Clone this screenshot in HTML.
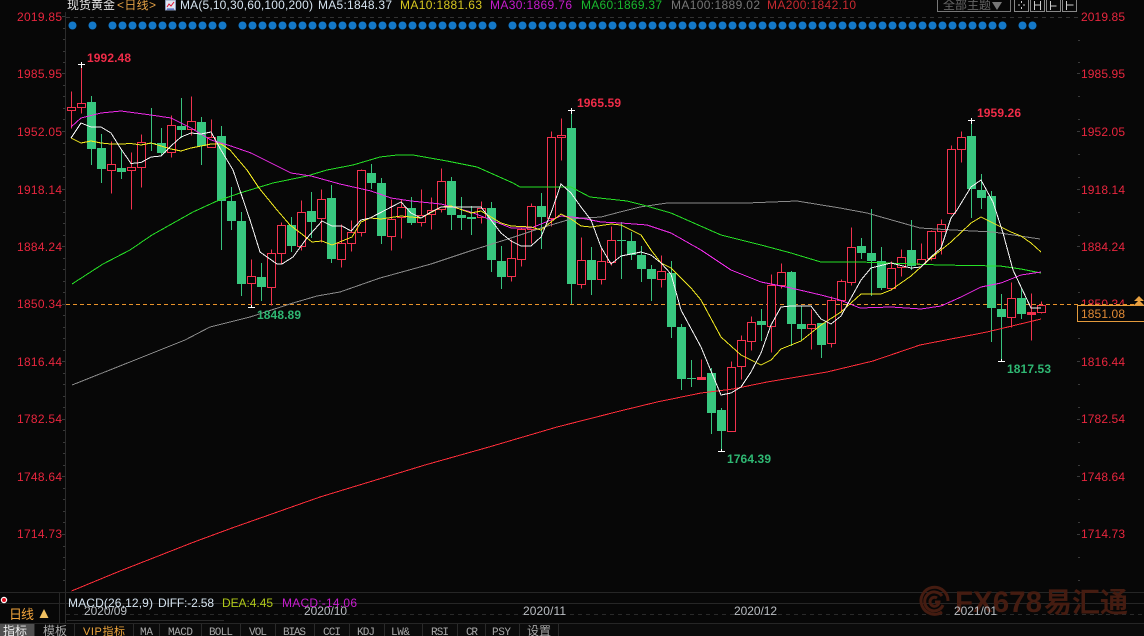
<!DOCTYPE html>
<html lang="zh"><head><meta charset="utf-8"><title>现货黄金 日线</title>
<style>
html,body{margin:0;padding:0;background:#070707;width:1144px;height:636px;overflow:hidden}
svg{display:block}
text{font-family:"Liberation Sans","Noto Sans CJK SC",sans-serif;font-size:12px}
.ax{fill:#e8263e}
.hi{fill:#f02c48;font-weight:bold}
.lo{fill:#2fb873;font-weight:bold}
.dt{fill:#b9bdc2}
.tb{fill:#a8a8a8;font-family:"Liberation Mono","Noto Sans CJK SC",monospace;font-size:11px}
.tc{fill:#a8a8a8;font-family:"Liberation Sans","Noto Sans CJK SC",sans-serif;font-size:12px}
.ma{fill:none;stroke-width:1;shape-rendering:crispEdges}
</style></head><body>
<svg xmlns="http://www.w3.org/2000/svg" width="1144" height="636" viewBox="0 0 1144 636">
<rect width="1144" height="636" fill="#070707"/>

<!-- frame lines -->
<path d="M65.5 12V623" stroke="#2b2b2b" fill="none"/>
<path d="M66 17.5H1078" stroke="#333" stroke-dasharray="4 4" fill="none"/>
<path d="M0 592.5H1144M0 603.5H1144M0 623.5H1144" stroke="#262626" fill="none"/>
<path d="M66 614.5H1144" stroke="#2a2a2a" stroke-dasharray="4 4" fill="none"/>
<path d="M67 620.5H224" stroke="#2a2a2a" fill="none"/>
<path d="M59.5 592V623" stroke="#262626" fill="none"/>

<!-- axis ticks -->
<path d="M62 16.5h3M63 28.5h2M63 39.5h2M63 51.5h2M63 62.5h2M62 73.5h3M63 85.5h2M63 96.5h2M63 108.5h2M63 119.5h2M62 131.5h3M63 143.5h2M63 154.5h2M63 166.5h2M63 177.5h2M62 189.5h3M63 200.5h2M63 212.5h2M63 223.5h2M63 235.5h2M62 246.5h3M63 258.5h2M63 269.5h2M63 281.5h2M63 292.5h2M62 304.5h3M63 315.5h2M63 327.5h2M63 338.5h2M63 350.5h2M62 361.5h3M63 373.5h2M63 384.5h2M63 396.5h2M63 407.5h2M62 419.5h3M63 430.5h2M63 442.5h2M63 453.5h2M63 465.5h2M62 476.5h3M63 488.5h2M63 499.5h2M63 511.5h2M63 522.5h2M62 534.5h3M63 546.5h2M63 557.5h2M63 569.5h2M63 580.5h2" stroke="#3a3a3a" fill="none"/>
<path d="M1078 40.5h2M1078 62.5h2M1077 73.5h3M1078 96.5h2M1078 119.5h2M1077 131.5h3M1078 154.5h2M1078 177.5h2M1077 189.5h3M1078 212.5h2M1078 235.5h2M1077 246.5h3M1078 269.5h2M1078 292.5h2M1077 361.5h3M1078 338.5h2M1078 384.5h2M1078 407.5h2M1077 419.5h3M1078 442.5h2M1078 465.5h2M1077 476.5h3M1078 499.5h2M1078 522.5h2M1077 534.5h3M1078 557.5h2M1078 580.5h2" stroke="#3a3a3a" fill="none"/>

<!-- y labels left -->
<g>
<text x="17" y="21" textLength="45" class="ax">2019.85</text>
<text x="17" y="78" textLength="45" class="ax">1985.95</text>
<text x="17" y="136" textLength="45" class="ax">1952.05</text>
<text x="17" y="194" textLength="45" class="ax">1918.14</text>
<text x="17" y="251" textLength="45" class="ax">1884.24</text>
<text x="17" y="308" textLength="45" class="ax">1850.34</text>
<text x="17" y="366" textLength="45" class="ax">1816.44</text>
<text x="17" y="423" textLength="45" class="ax">1782.54</text>
<text x="17" y="481" textLength="45" class="ax">1748.64</text>
<text x="17" y="538" textLength="45" class="ax">1714.73</text>
</g>
<!-- y labels right -->
<g>
<text x="1081" y="21" textLength="44" class="ax">2019.85</text>
<text x="1081" y="78" textLength="44" class="ax">1985.95</text>
<text x="1081" y="136" textLength="44" class="ax">1952.05</text>
<text x="1081" y="194" textLength="44" class="ax">1918.14</text>
<text x="1081" y="251" textLength="44" class="ax">1884.24</text>
<text x="1081" y="308" textLength="44" class="ax">1850.34</text>
<text x="1081" y="366" textLength="44" class="ax">1816.44</text>
<text x="1081" y="423" textLength="44" class="ax">1782.54</text>
<text x="1081" y="481" textLength="44" class="ax">1748.64</text>
<text x="1081" y="538" textLength="44" class="ax">1714.73</text>
</g>

<!-- title bar -->
<text x="67" y="9" fill="#e4e4e4" textLength="48">现货黄金</text>
<text x="117" y="9" fill="#e2a045" textLength="39">&lt;日线&gt;</text>
<rect x="165.5" y="0" width="10" height="10" fill="#dfe6f2" stroke="#8899bb"/>
<path d="M167 7l2-3 2 2 3-4" stroke="#e01030" fill="none"/>
<path d="M167 9h7" stroke="#3050c0" fill="none"/>
<text x="180" y="9" fill="#d6e4f0" textLength="133">MA(5,10,30,60,100,200)</text>
<text x="318" y="9" fill="#d6e4f0" textLength="74">MA5:1848.37</text>
<text x="400" y="9" fill="#d8c820" textLength="82">MA10:1881.63</text>
<text x="490" y="9" fill="#c81ccf" textLength="82">MA30:1869.76</text>
<text x="581" y="9" fill="#19b82e" textLength="81">MA60:1869.37</text>
<text x="671" y="9" fill="#777" textLength="89">MA100:1889.02</text>
<text x="767" y="9" fill="#c82a30" textLength="89">MA200:1842.10</text>

<!-- top right controls -->
<path d="M937.5 0V11.5H1010.5V0" fill="none" stroke="#777"/>
<text x="943" y="9" fill="#666" textLength="48">全部主题</text>
<path d="M992 2h10l-5 8z" fill="#777"/>
<g fill="none" stroke="#888">
<path d="M1014.5 0V11.5H1028.5V0M1030.5 0V11.5H1044.5V0M1046.5 0V11.5H1060.5V0M1062.5 0V11.5H1076.5V0"/>
<path d="M1021.5 1v2M1021.5 7v2M1018 5h2M1023 5h2" stroke="#ccc"/>
<path d="M1034.5 1v9M1040.500 1v9M1034.5 5h6" stroke="#ccc"/>
<path d="M1050.5 1v9M1050.5 6h6" stroke="#ccc"/>
<path d="M1066.5 1v9M1066.5 5h7" stroke="#ccc"/>
</g>

<!-- event dots -->
<g fill="#1478c8">
<circle cx="72.500" cy="25.5" r="4"/><circle cx="92.5" cy="25.5" r="4"/>
<circle cx="112.5" cy="25.5" r="4"/><circle cx="122.5" cy="25.5" r="4"/><circle cx="132.5" cy="25.5" r="4"/><circle cx="142.5" cy="25.5" r="4"/><circle cx="152.5" cy="25.5" r="4"/><circle cx="162.5" cy="25.5" r="4"/><circle cx="172.5" cy="25.5" r="4"/><circle cx="182.5" cy="25.5" r="4"/><circle cx="192.5" cy="25.5" r="4"/><circle cx="202.5" cy="25.5" r="4"/><circle cx="212.5" cy="25.5" r="4"/><circle cx="222.5" cy="25.5" r="4"/>
<circle cx="242.5" cy="25.5" r="4"/><circle cx="252.5" cy="25.5" r="4"/><circle cx="262.5" cy="25.5" r="4"/><circle cx="272.5" cy="25.5" r="4"/><circle cx="282.5" cy="25.5" r="4"/><circle cx="292.5" cy="25.5" r="4"/><circle cx="302.5" cy="25.5" r="4"/><circle cx="312.5" cy="25.5" r="4"/><circle cx="322.5" cy="25.5" r="4"/><circle cx="332.5" cy="25.5" r="4"/><circle cx="342.5" cy="25.5" r="4"/><circle cx="352.5" cy="25.5" r="4"/><circle cx="362.5" cy="25.5" r="4"/><circle cx="372.5" cy="25.5" r="4"/><circle cx="382.5" cy="25.5" r="4"/><circle cx="392.5" cy="25.5" r="4"/><circle cx="402.5" cy="25.5" r="4"/><circle cx="412.5" cy="25.5" r="4"/><circle cx="422.5" cy="25.5" r="4"/><circle cx="432.5" cy="25.5" r="4"/><circle cx="442.5" cy="25.5" r="4"/><circle cx="452.5" cy="25.5" r="4"/><circle cx="462.5" cy="25.5" r="4"/><circle cx="472.5" cy="25.5" r="4"/><circle cx="482.5" cy="25.5" r="4"/><circle cx="492.5" cy="25.5" r="4"/>
<circle cx="512.5" cy="25.5" r="4"/><circle cx="522.5" cy="25.5" r="4"/><circle cx="532.5" cy="25.5" r="4"/><circle cx="542.5" cy="25.5" r="4"/><circle cx="552.5" cy="25.5" r="4"/><circle cx="562.5" cy="25.5" r="4"/><circle cx="572.5" cy="25.5" r="4"/><circle cx="582.5" cy="25.5" r="4"/><circle cx="592.5" cy="25.5" r="4"/><circle cx="602.5" cy="25.5" r="4"/><circle cx="612.5" cy="25.5" r="4"/><circle cx="622.5" cy="25.5" r="4"/><circle cx="632.5" cy="25.5" r="4"/><circle cx="642.5" cy="25.5" r="4"/><circle cx="652.5" cy="25.5" r="4"/><circle cx="662.5" cy="25.5" r="4"/><circle cx="672.5" cy="25.5" r="4"/><circle cx="682.5" cy="25.5" r="4"/><circle cx="692.5" cy="25.5" r="4"/><circle cx="702.5" cy="25.5" r="4"/><circle cx="712.5" cy="25.5" r="4"/><circle cx="722.5" cy="25.5" r="4"/><circle cx="732.5" cy="25.5" r="4"/><circle cx="742.5" cy="25.5" r="4"/><circle cx="752.5" cy="25.5" r="4"/><circle cx="762.5" cy="25.5" r="4"/><circle cx="772.5" cy="25.5" r="4"/><circle cx="782.5" cy="25.5" r="4"/><circle cx="792.5" cy="25.5" r="4"/><circle cx="802.5" cy="25.5" r="4"/><circle cx="812.5" cy="25.5" r="4"/><circle cx="822.5" cy="25.5" r="4"/><circle cx="832.5" cy="25.5" r="4"/><circle cx="842.5" cy="25.5" r="4"/><circle cx="852.5" cy="25.5" r="4"/><circle cx="862.5" cy="25.5" r="4"/><circle cx="872.5" cy="25.5" r="4"/><circle cx="882.5" cy="25.5" r="4"/><circle cx="892.5" cy="25.5" r="4"/><circle cx="902.5" cy="25.5" r="4"/><circle cx="912.5" cy="25.5" r="4"/><circle cx="922.5" cy="25.5" r="4"/><circle cx="932.5" cy="25.5" r="4"/><circle cx="942.5" cy="25.5" r="4"/><circle cx="952.5" cy="25.5" r="4"/><circle cx="962.5" cy="25.5" r="4"/><circle cx="972.5" cy="25.5" r="4"/><circle cx="982.5" cy="25.5" r="4"/><circle cx="992.5" cy="25.5" r="4"/><circle cx="1002.5" cy="25.5" r="4"/>
<circle cx="1022.5" cy="25.5" r="4"/><circle cx="1032.5" cy="25.5" r="4"/>
</g>

<!-- current price dashed -->
<path d="M66 304.5H1144" stroke="#e8922a" stroke-dasharray="4 3" fill="none"/>

<!-- green candles -->
<g shape-rendering="crispEdges">
<path transform="translate(.5,0)" fill="none" stroke="#36c47f" d="M91 96V165M101 134V183M121 150V179M151 108V151M161 128V156M181 98V138M201 117V165M221 126V250M231 187V230M241 212V296M261 263V301M291 217V252M311 192V238M331 185V263M371 164V189M381 178V244M411 197V225M451 177V230M461 197V230M471 206V235M491 202V272M501 246V289M541 193V249M571 110V304M591 247V295M621 222V279M631 232V260M641 246V282M651 265V301M671 261V338M681 324V390M691 360V387M711 368V434M721 408V451M761 309V341M791 271V346M801 306V340M821 323V358M861 238V259M871 209V296M881 247V290M911 220V270M971 120V218M981 174V209M991 191V342M1001 294V362M1021 288V319"/>
<path fill="#38c77f" d="M87 102h9v47h-9zM97 148h9v21h-9zM117 168h9v4h-9zM147 143h9v1h-9zM157 143h9v10h-9zM177 126h9v4h-9zM197 122h9v24h-9zM217 136h9v65h-9zM227 201h9v20h-9zM237 221h9v63h-9zM257 277h9v10h-9zM287 225h9v21h-9zM307 211h9v11h-9zM327 198h9v61h-9zM367 173h9v10h-9zM377 183h9v53h-9zM407 208h9v15h-9zM447 181h9v34h-9zM457 215h9v3h-9zM467 217h9v2h-9zM487 208h9v52h-9zM497 261h9v16h-9zM537 206h9v11h-9zM567 128h9v156h-9zM587 260h9v20h-9zM617 240h9v1h-9zM627 241h9v14h-9zM637 255h9v14h-9zM647 269h9v10h-9zM667 273h9v54h-9zM677 327h9v52h-9zM687 378h9v1h-9zM707 373h9v40h-9zM717 410h9v21h-9zM757 321h9v4h-9zM787 272h9v52h-9zM797 324h9v5h-9zM817 323h9v22h-9zM857 246h9v7h-9zM867 253h9v8h-9zM877 261h9v27h-9zM907 250h9v16h-9zM967 136h9v53h-9zM977 190h9v8h-9zM987 196h9v112h-9zM997 309h9v8h-9zM1017 298h9v16h-9z"/>
<!-- red candles -->
<g transform="translate(.5,.5)">
<path fill="none" stroke="#f2324e" d="M71 91V128M81 63V113M111 141V193M131 152V209M141 134V187M171 115V157M191 96V135M211 119V147M251 259V307M271 249V305M281 222V263M301 200V250M321 189V242M341 224V267M351 220V251M361 169V236M391 199V250M401 199V238M421 189V226M431 197V229M441 168V212M481 201V223M511 239V281M521 227V266M531 203V243M551 131V226M561 118V160M581 237V288M601 248V284M611 226V265M661 255V287M701 359V379M731 361V431M741 335V379M751 316V350M771 274V352M781 263V288M811 309V349M831 296V347M841 279V312M851 227V285M891 261V290M901 249V276M921 243V265M931 230V260M941 219V254M951 145V214M961 131V162M1011 282V327M1031 293V340M1041 301V313"/>
<path fill="#050505" stroke="#f2324e" d="M67 107h8v3h-8zM77 103h8v4h-8zM107 164h8v6h-8zM127 167h8v3h-8zM137 142h8v25h-8zM167 125h8v27h-8zM187 121h8v8h-8zM207 137h8v10h-8zM247 276h8v7h-8zM267 253h8v34h-8zM277 225h8v28h-8zM297 212h8v34h-8zM317 199h8v19h-8zM337 243h8v16h-8zM347 232h8v11h-8zM357 170h8v62h-8zM387 219h8v17h-8zM397 207h8v10h-8zM417 215h8v7h-8zM427 210h8v4h-8zM437 181h8v28h-8zM477 208h8v9h-8zM507 258h8v18h-8zM517 229h8v30h-8zM527 206h8v23h-8zM547 137h8v81h-8zM557 135h8v2h-8zM577 260h8v24h-8zM597 261h8v18h-8zM607 240h8v22h-8zM657 271h8v8h-8zM727 367h8v64h-8zM737 340h8v26h-8zM747 322h8v19h-8zM767 285h8v41h-8zM777 272h8v13h-8zM807 324h8v4h-8zM827 300h8v43h-8zM837 281h8v19h-8zM847 247h8v35h-8zM887 268h8v20h-8zM897 257h8v10h-8zM917 259h8v5h-8zM927 231h8v27h-8zM937 224h8v7h-8zM947 149h8v64h-8zM957 137h8v12h-8zM1007 298h8v19h-8zM1037 305h8v7h-8z"/>
<path fill="#f2324e" stroke="#f2324e" d="M697 377h8v2h-8zM1027 312h8v2h-8z"/>
</g>
</g>

<!-- moving averages -->
<polyline class="ma" stroke="#ff2d3a" points="71.5,591 120,571 194,542 232,528 320,497 366,483 425,465 489,447 557,427 620,411 657,402 701,393 733,389 767,382 827,372 873,361 920,345 987,332 1041,319"/>
<polyline class="ma" stroke="#8a8a8a" points="72,385 130,362 185,340 210,327 250,317 293,303 317,296 340,292 380,278 431,264 473,250 511,238 541,228 571,219 601,217 620,212 640,207 667,203 747,203 797,201 840,208 867,213 920,228 953,230 993,232 1040,239"/>
<polyline class="ma" stroke="#26e026" points="72,284 103,264 130,250 152,235 193,212 217,201 240,193 273,183 307,176 327,170 353,165 380,157 397,155 413,155 447,161 477,167 513,183 520,187 571,187 590,197 627,201 643,205 671,213 721,235 761,245 791,253 821,262 860,262 940,265 1000,266 1021,269 1041,273"/>
<polyline class="ma" stroke="#ee2be8" points="71,127 81,118 101,113 121,111 151,115 171,118 191,128 211,140 231,146 251,153 271,163 291,173 311,176 340,184 371,191 391,198 411,201 441,204 471,212 491,220 511,228 531,228 551,220 561,216 581,218 601,222 621,223 647,225 671,233 701,250 731,270 761,282 791,288 821,295 840,300 860,308 891,307 921,309 941,306 961,297 981,287 1001,283 1021,275 1041,272"/>
<polyline class="ma" stroke="#f0e820" points="71,138 81,143 91,141 101,143 111,144 121,144 131,143.5 141,145 151,143 161,146 171,149 181,151 191,148 201,146 211,144 221,144 230,150 247,170 259,188 277,210 290,225 307,238 312,242 322,241 332,245 342,241 352,237 361,222 370,218 381,219 401,216 421,218 441,207 451,206 471,213 481,211 501,223 511,226 531,227 541,230 561,214 571,219 581,226 591,227 611,224 621,225 641,235 651,250 661,263 671,268 691,288 701,300 721,337 741,355 761,365 771,360 781,349 801,341 821,325 841,312 861,294 881,294 891,290 911,276 931,258 951,242 971,223 981,217 1001,227 1011,232 1021,236 1031,243 1041,252"/>
<polyline class="ma" stroke="#f4f4f4" points="71,138 81,123 91,127 101,127 111,133 121,149 131,163.5 141,162.5 151,157 161,156 171,146 181,137 191,133 201,134 211,132 221,150 233,170 250,220 260,252 277,264 282,264 293,257 307,238 322,221 332,226 342,226 351,231 361,220 370,218 401,202 411,213 421,218 431,212 441,207 481,207 491,220 501,233 511,241 521,246 531,246 541,237 551,213 561,184 571,193 581,207 591,220 601,247 611,264 621,256 631,254 641,252 651,255 661,263 671,274 681,310 701,347 721,395 731,393 741,387 751,372 761,353 771,325 781,307 791,306 811,306 821,319 831,324 841,316 851,298 861,280 871,268 891,263 911,268 921,267 931,257 941,248 951,218 957,210 971,187 981,180 993,202 1003,233 1013,270 1031,308 1041,308"/>

<!-- hi/lo markers -->
<path d="M78 64.5h7M81.5 62v6M568 110.5h7M571.5 108v6M968 120.5h7M971.5 118v6M248 307.5h7M251.5 305v3M718 451.5h7M721.5 449v3M998 361.5h7M1001.5 359v3" stroke="#fff" fill="none"/>
<text x="87" y="62" class="hi" textLength="44">1992.48</text>
<text x="577" y="107" class="hi" textLength="44">1965.59</text>
<text x="977" y="117" class="hi" textLength="44">1959.26</text>
<text x="257" y="319" class="lo" textLength="44">1848.89</text>
<text x="727" y="463" class="lo" textLength="44">1764.39</text>
<text x="1007" y="373" class="lo" textLength="44">1817.53</text>

<!-- current price box -->
<rect x="1077.5" y="305.5" width="70" height="16" fill="#070707" stroke="#e39a3c"/>
<text x="1081" y="318" fill="#e08a35" textLength="44">1851.08</text>
<path d="M1139 296l5 5h-10zM1139 300l5 5h-10z" fill="#e8a040"/>

<!-- dates -->
<text x="84" y="615" class="dt" textLength="43">2020/09</text>
<text x="304" y="615" class="dt" textLength="43">2020/10</text>
<text x="523" y="615" class="dt" textLength="43">2020/11</text>
<text x="734" y="615" class="dt" textLength="43">2020/12</text>

<!-- MACD legend -->
<text x="68" y="607" fill="#d6e4f0" textLength="85">MACD(26,12,9)</text>
<text x="158" y="607" fill="#d6e4f0" textLength="56">DIFF:-2.58</text>
<text x="222" y="607" fill="#b0c818" textLength="51">DEA:4.45</text>
<text x="282" y="607" fill="#c81ccf" textLength="75">MACD:-14.06</text>

<!-- bottom-left -->
<circle cx="4" cy="600" r="2.6" fill="#e01020" stroke="#fff" stroke-width="1.2"/>
<text x="9" y="619" fill="#f2a43c" style="font-size:13px" textLength="25">日线</text>
<path d="M44 609l4.500 9h-9z" fill="#f0c060"/>

<!-- watermark -->
<g>
<text x="955" y="612" style="font-size:30px;font-weight:bold" fill="#451c11" textLength="87" lengthAdjust="spacingAndGlyphs">FX678</text>
<text x="1044" y="612" style="font-size:28px;font-weight:bold" fill="#451c11" textLength="84">易汇通</text>
</g>
<g fill="none" stroke="#451c11" stroke-width="3">
<path d="M948 601a13.500 13.500 0 1 0-6 11"/>
<path d="M942 596a9.500 9.500 0 1 0 1 9"/>
<path d="M937 598a4.500 4.500 0 1 0 2 4h-4"/>
</g>
<text x="954" y="615" class="dt" textLength="43">2021/01</text>

<!-- tab bar -->
<rect x="0" y="624" width="1144" height="12" fill="#0b0b0b"/>
<rect x="0" y="624" width="34" height="12" fill="#505050"/>
<path d="M34.500 624V636M74.500 624V636M133.500 624V636M159.500 624V636M201.500 624V636M240.500 624V636M275.500 624V636M314.500 624V636M349.500 624V636M384.500 624V636M422.500 624V636M457.500 624V636M485.500 624V636M519.500 624V636M558.500 624V636" stroke="#2a2a2a" fill="none"/>
<text x="3" y="635" class="tc" style="fill:#eee" textLength="24">指标</text>
<text x="43" y="635" class="tc" textLength="24">模板</text>
<text x="83" y="635" class="tc" style="fill:#f0a63c;font-size:11px" textLength="42">VIP指标</text>
<text x="140" y="635" class="tb" textLength="13">MA</text>
<text x="168" y="635" class="tb" textLength="25">MACD</text>
<text x="209" y="635" class="tb" textLength="24">BOLL</text>
<text x="249" y="635" class="tb" textLength="18">VOL</text>
<text x="283" y="635" class="tb" textLength="23">BIAS</text>
<text x="323" y="635" class="tb" textLength="18">CCI</text>
<text x="357" y="635" class="tb" textLength="18">KDJ</text>
<text x="391" y="635" class="tb" textLength="19">LW&amp;</text>
<text x="431" y="635" class="tb" textLength="18">RSI</text>
<text x="466" y="635" class="tb" textLength="12">CR</text>
<text x="492" y="635" class="tb" textLength="19">PSY</text>
<text x="527" y="635" class="tc" textLength="24">设置</text>
</svg>
</body></html>
